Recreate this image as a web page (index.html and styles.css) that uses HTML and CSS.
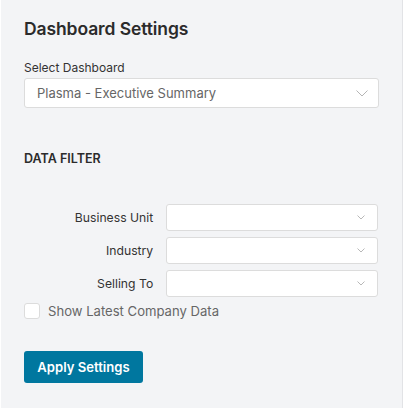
FILE: index.html
```html
<!DOCTYPE html>
<html>
<head>
<meta charset="utf-8">
<link rel="stylesheet" href="styles.css">
</head>
<body>
<div class="panel">
  <h1 class="title">Dashboard Settings</h1>
  <div class="field">
    <div class="field-label">Select Dashboard</div>
    <div class="select select-lg">
      <span class="select-value">Plasma - Executive Summary</span>
      <svg class="chev-lg" width="12" height="7" viewBox="0 0 12 7"><path d="M0.5 0.5 L6 6 L11.5 0.5" fill="none" stroke="#b5b5b5" stroke-width="1"/></svg>
    </div>
  </div>
  <h2 class="section">DATA FILTER</h2>
  <div class="filters">
    <div class="row">
      <div class="row-label">Business Unit</div>
      <div class="select select-sm"><svg width="8" height="5" viewBox="0 0 8 5"><path d="M0.5 0.5 L4 4 L7.5 0.5" fill="none" stroke="#b8b8b8" stroke-width="1"/></svg></div>
    </div>
    <div class="row">
      <div class="row-label">Industry</div>
      <div class="select select-sm"><svg width="8" height="5" viewBox="0 0 8 5"><path d="M0.5 0.5 L4 4 L7.5 0.5" fill="none" stroke="#b8b8b8" stroke-width="1"/></svg></div>
    </div>
    <div class="row">
      <div class="row-label">Selling To</div>
      <div class="select select-sm"><svg width="8" height="5" viewBox="0 0 8 5"><path d="M0.5 0.5 L4 4 L7.5 0.5" fill="none" stroke="#b8b8b8" stroke-width="1"/></svg></div>
    </div>
  </div>
  <label class="check">
    <span class="box"></span>
    <span class="check-text">Show Latest Company Data</span>
  </label>
  <button class="btn">Apply Settings</button>
</div>
</body>
</html>
```
FILE: styles.css
```css
html, body {
  margin: 0;
  padding: 0;
  background: #ffffff;
}
body {
  font-family: Inter, "Noto Sans", sans-serif;
  width: 404px;
  height: 409px;
  overflow: hidden;
}
.panel {
  box-sizing: border-box;
  margin-left: 1px;
  width: 402px;
  height: 408px;
  background: #f3f4f6;
  border-right: 1px solid #e2e3e6;
  padding: 18px 24px 0 23px;
}
.title {
  margin: 0;
  font-size: 17.5px;
  font-weight: 600;
  color: #2b2b2b;
  line-height: 22px;
  letter-spacing: -0.1px;
}
.field {
  margin-top: 20px;
}
.field-label {
  font-size: 12px;
  color: #333;
  line-height: 16px;
}
.select {
  box-sizing: border-box;
  background: #fff;
  border: 1px solid #dcdcdc;
  border-radius: 3px;
  display: flex;
  align-items: center;
  justify-content: space-between;
}
.select-lg {
  margin-top: 2px;
  width: 355px;
  height: 30px;
  padding: 0 10px 0 12px;
}
.select-value {
  font-size: 13px;
  color: #666;
}
.select-sm {
  width: 213px;
  height: 27px;
  justify-content: flex-end;
  padding-right: 12px;
}
.section {
  margin: 43px 0 0 0;
  font-size: 12.5px;
  font-weight: 600;
  color: #2b2b2b;
  line-height: 16px;
}
.filters {
  margin-top: 37px;
  display: flex;
  flex-direction: column;
  gap: 6px;
}
.row {
  display: flex;
  align-items: center;
  gap: 13px;
}
.row-label {
  width: 130px;
  text-align: right;
  font-size: 12.2px;
  color: #333;
}
.check {
  margin-top: 6px;
  display: flex;
  align-items: center;
  gap: 8px;
}
.box {
  box-sizing: border-box;
  width: 16px;
  height: 16px;
  background: #fff;
  border: 1px solid #dcdcdc;
  border-radius: 3px;
}
.check-text {
  font-size: 13.1px;
  color: #666;
}
.btn {
  margin-top: 32px;
  display: block;
  width: 119px;
  height: 32px;
  border: none;
  border-radius: 3px;
  background: #00779f;
  color: #fff;
  font-family: Inter, "Noto Sans", sans-serif;
  font-size: 13.1px;
  font-weight: 600;
  padding: 0;
}
```
